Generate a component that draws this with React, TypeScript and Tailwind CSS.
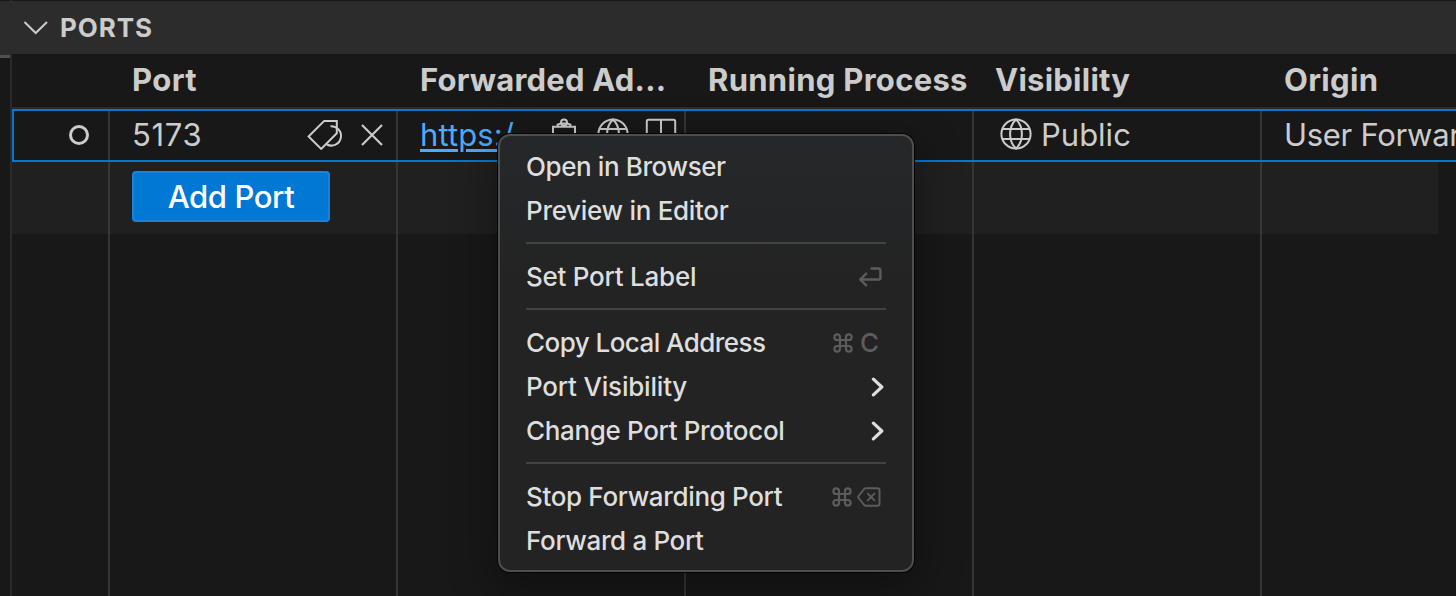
import React from "react";

type Item = { label: string; right?: React.ReactNode; spacing: string };

const COLS = "grid grid-cols-[96px_288px_288px_288px_288px_288px]";
const CELL = "border-l-2 border-[#353535] pl-[22px] flex items-center min-w-0";

function Globe() {
  return (
    <svg className="mb-[5px]" width="32" height="32" viewBox="0 0 32 32" fill="none" stroke="currentColor" strokeWidth="2">
      <circle cx="16" cy="16" r="14.6" />
      <path d="M16 1.4c-3.4 3.2-5.9 8.6-5.9 14.6s2.5 11.4 5.9 14.6c3.4-3.2 5.9-8.6 5.9-14.6S19.4 4.6 16 1.4z" />
      <path d="M2.6 11h26.8M2.6 21h26.8" />
    </svg>
  );
}

function Tag() {
  return (
    <svg className="mb-[4px]" width="38" height="32" viewBox="0 0 38 32" fill="none" stroke="currentColor" strokeWidth="2">
      <path d="M2.6 18.5 18.2 2.9h12.6v12.4L15.2 30.9z" />
      <path d="M24.5 8.2a9.7 9.7 0 1 1-3.6 18.3" />
    </svg>
  );
}

function Command() {
  return (
    <svg width="20" height="20" viewBox="0 0 20 20" fill="none" stroke="currentColor" strokeWidth="2.2">
      <path d="M7 7V4.2A2.8 2.8 0 1 0 4.2 7h11.6A2.8 2.8 0 1 0 13 4.2v11.6a2.8 2.8 0 1 0 2.8-2.8H4.2A2.8 2.8 0 1 0 7 15.8z" />
    </svg>
  );
}

function Arrow() {
  return (
    <svg className="mr-[2px]" width="13" height="20" viewBox="0 0 13 20" fill="none" stroke="#dedede" strokeWidth="3.2" strokeLinecap="round" strokeLinejoin="round">
      <path d="M2.4 2.2 10.8 10 2.4 17.8" />
    </svg>
  );
}

function Row({ label, right, spacing }: Item) {
  return (
    <div className={"flex h-11 items-center justify-between whitespace-nowrap " + spacing}>
      <span className="mb-[2px]">{label}</span>
      <span className="flex items-center tracking-normal text-[#5c5c5c]">{right}</span>
    </div>
  );
}

function Separator() {
  return <div className="h-[22px] pt-[9px]"><div className="h-[2px] bg-[#424343]" /></div>;
}

function Menu() {
  return (
    <div className="absolute left-[498px] top-[134px] h-[438px] w-[416px] rounded-[12px] border-2 border-[#4d4e4e] bg-[#232323] bg-linear-to-b from-[#25282a] to-[#232323] to-35% px-[26px] pt-[9px] text-[26px] font-[450] text-[#dedede] shadow-[0_0_0_1px_#050505,0_14px_44px_6px_rgba(0,0,0,0.32)]">
      <Row label="Open in Browser" spacing="tracking-[-0.4px]" />
      <Row label="Preview in Editor" spacing="tracking-[-0.3px]" />
      <Separator />
      <Row label="Set Port Label" spacing="tracking-[-0.25px]" right={
        <svg className="mr-[4px]" width="24" height="20" viewBox="0 0 24 20" fill="none" stroke="currentColor" strokeWidth="2.4" strokeLinecap="round" strokeLinejoin="round">
          <path d="M13.5 1.5h7.2q1.7 0 1.7 1.7v7.6q0 1.7-1.7 1.7H2.2M8.2 6.6l-6 5.9 6 5.8" />
        </svg>
      } />
      <Separator />
      <Row label="Copy Local Address" spacing="tracking-[-0.55px]" right={<><Command /><span className="ml-[7px] mr-[7px] mb-[2px]">C</span></>} />
      <Row label="Port Visibility" spacing="tracking-[-0.2px]" right={<Arrow />} />
      <Row label="Change Port Protocol" spacing="tracking-[-0.35px]" right={<Arrow />} />
      <Separator />
      <Row label="Stop Forwarding Port" spacing="tracking-[-0.35px]" right={
        <><Command />
          <svg className="ml-[5px] mr-[5px]" width="24" height="20" viewBox="0 0 24 20" fill="none" stroke="currentColor" strokeWidth="2" strokeLinecap="round" strokeLinejoin="round">
            <path d="M8.8 1.2H20.3q2.2 0 2.2 2.2v13.2q0 2.2-2.2 2.2H8.8q-.9 0-1.6-.8L1.6 11q-.7-1 0-2L7.2 2q.7-.8 1.6-.8zM10.8 6.6l6.6 6.8M17.4 6.6l-6.6 6.8" />
          </svg></>
      } />
      <Row label="Forward a Port" spacing="tracking-[-0.35px]" />
    </div>
  );
}

export default function App() {
  return (
    <div className="relative flex h-[596px] w-[1456px] overflow-hidden bg-[#181818] font-['Inter',sans-serif] text-[#cccccc]">
      <div className="w-[10px] shrink-0">
        <div className="mt-px h-[54px] bg-[#2c2c2c]" />
        <div className="h-[3px] bg-[#505050]" />
      </div>
      <div className="w-[2px] shrink-0 bg-[#2b2b2b]" />
      <div className="flex w-[1444px] shrink-0 flex-col">
        <div className="mt-px flex h-[53px] items-center bg-[#2c2c2c]">
          <svg className="ml-[11px] mb-px" width="26" height="16" viewBox="0 0 26 16" fill="none" stroke="currentColor" strokeWidth="2">
            <path d="M1.5 3 12.7 14 24 3" />
          </svg>
          <h2 className="ml-[11px] text-[26px] font-bold tracking-[0.9px]">PORTS</h2>
        </div>
        <div className={COLS + " h-[55px] border-b-2 border-[#2b2b2b] text-[31px] font-bold leading-[52px] whitespace-nowrap"}>
          <span />
          <span className="pl-6 tracking-[0.4px]">Port</span>
          <span className="pl-6 tracking-[0.2px]">Forwarded Ad...</span>
          <span className="pl-6 tracking-[0.3px]">Running Process</span>
          <span className="pl-[23px] tracking-[0.25px]">Visibility</span>
          <span className="pl-6 tracking-[0.3px]">Origin</span>
        </div>
        <div className="relative h-[487px]">
          <div className={COLS + " h-[53px] text-[31px] leading-[52px] whitespace-nowrap"}>
            <div className="flex items-center justify-end pr-[19px]">
              <span className="mb-[2px] size-[20px] rounded-full border-[3px] border-[#cccccc]" />
            </div>
            <div className={CELL}>
              <span className="mb-[2px] w-[174px] tracking-[0.7px]">5173</span>
              <Tag />
              <svg className="ml-[16px] mb-[3px]" width="24" height="24" viewBox="0 0 24 24" stroke="currentColor" strokeWidth="2.1">
                <path d="M2 2 22 22M22 2 2 22" />
              </svg>
            </div>
            <div className={CELL}>
              <span className="mb-[2px] w-[130px] text-[#4daafc] underline decoration-[3px] underline-offset-[3px] tracking-[0.1px]">https:/</span>
              <svg className="mb-[5px]" width="28" height="32" viewBox="0 0 28 32" fill="none" stroke="currentColor" strokeWidth="2">
                <path d="M3 8.7h22V30H3zM7.6 8.7V6.6l3-1h6.8l3 1v2.1" />
                <circle cx="14" cy="4.6" r="3" />
              </svg>
              <span className="ml-[19px]"><Globe /></span>
              <svg className="ml-[16px] mb-[5px] shrink-0" width="32" height="32" viewBox="0 0 32 32" fill="none" stroke="currentColor" strokeWidth="2">
                <path d="M3.4 1.8h25.2q1.6 0 1.6 1.6v25H1.8v-25q0-1.6 1.6-1.6zM16 1.8v26.6" />
              </svg>
            </div>
            <div className={CELL} />
            <div className={CELL}>
              <span className="ml-[4px] mr-[9px]"><Globe /></span>
              <span className="mb-[2px] tracking-normal">Public</span>
            </div>
            <div className={CELL}><span className="mb-[2px] tracking-[-0.3px]">User Forwarded</span></div>
          </div>
          <div className="pointer-events-none absolute -right-2 left-0 top-0 h-[53px] border-2 border-[#0078d4]" />
          <div className={COLS + " h-[72px] w-[1426px] bg-[#202020]"}>
            <span />
            <div className="border-l-2 border-[#373737] pl-[22px] pt-[9px]">
              <button className="h-[51px] w-[198px] rounded-[4px] border-2 border-[#1a82d9] bg-[#0078d4] text-[31px] font-[450] leading-none tracking-[-0.4px] text-white">Add Port</button>
            </div>
            <div className={CELL} /><div className={CELL} /><div className={CELL} />
            <div className="border-l-2 border-[#373737]" />
          </div>
          <div className={COLS + " h-[362px]"}>
            <span />
            <div className={CELL} /><div className={CELL} /><div className={CELL} /><div className={CELL} /><div className={CELL} />
          </div>
        </div>
      </div>
      <Menu />
    </div>
  );
}
